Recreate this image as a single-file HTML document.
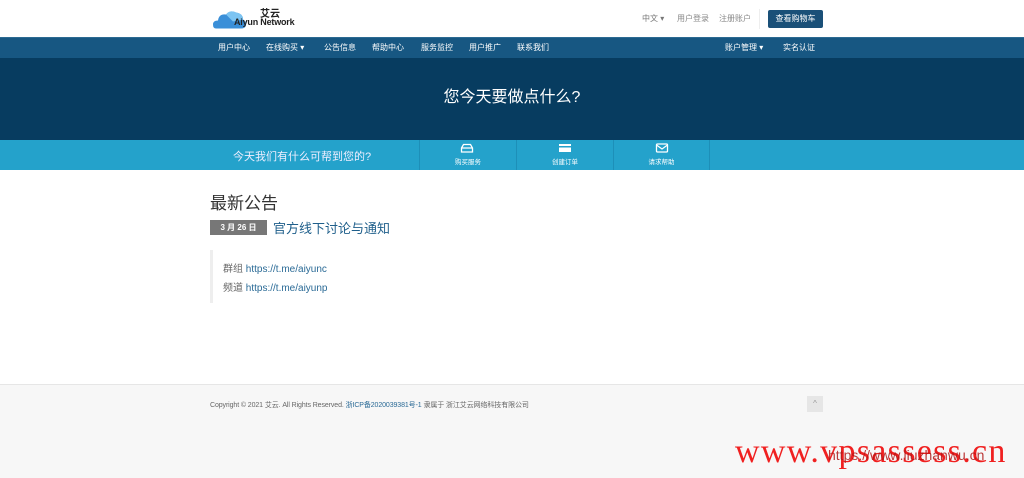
<!DOCTYPE html>
<html><head><meta charset="utf-8"><style>
*{margin:0;padding:0;box-sizing:border-box}
body{width:1024px;height:478px;overflow:hidden;background:#fff;font-family:"Liberation Sans","Noto Sans CJK SC",sans-serif;position:relative}
.a{position:absolute}
</style></head><body>
<div class="a" style="left:213px;top:9px;width:34px;height:21px">
<svg width="34" height="21" viewBox="0 0 34 20"><path d="M3 19 Q0 19 0 15 Q0 11 5 11 Q6 4 13 5 Q17 0 23 3 Q30 4 30 10 Q34 12 33 16 Q32 19 28 19Z" fill="#3a8fd8"/><path d="M13 5 Q17 0 23 3 Q30 4 30 10 L20 12Z" fill="#7cc4f2"/></svg></div>
<div class="a" style="left:260px;top:5px;font-size:10px;font-weight:bold;color:#222">艾云</div>
<div class="a" style="left:234px;top:17px;font-size:9px;font-weight:bold;color:#222;letter-spacing:-0.2px">Aiyun Network</div>
<div class="a" style="left:642px;top:13px;font-size:8px;color:#777">中文 ▾</div>
<div class="a" style="left:677px;top:13px;font-size:8px;color:#888">用户登录</div>
<div class="a" style="left:719px;top:13px;font-size:8px;color:#888">注册账户</div>
<div class="a" style="left:759px;top:9px;width:1px;height:20px;background:#eee"></div>
<div class="a" style="left:768px;top:10px;width:55px;height:18px;background:#1a5078;border-radius:2px;color:#fff;font-size:8px;text-align:center;line-height:18px">查看购物车</div>
<div class="a" style="left:0;top:37px;width:1024px;height:21px;background:#175782;border-top:1px solid #2c6a92"></div>
<div class="a" style="left:0;top:37px;width:1024px;height:21px;color:#fff;font-size:8px;line-height:21px">
<span class="a" style="left:218px">用户中心</span><span class="a" style="left:266px">在线购买 ▾</span><span class="a" style="left:324px">公告信息</span><span class="a" style="left:372px">帮助中心</span><span class="a" style="left:421px">服务监控</span><span class="a" style="left:469px">用户推广</span><span class="a" style="left:517px">联系我们</span><span class="a" style="left:725px">账户管理 ▾</span><span class="a" style="left:783px">实名认证</span></div>
<div class="a" style="left:0;top:58px;width:1024px;height:82px;background:#073c60"></div>
<div class="a" style="left:0;top:83px;width:1024px;text-align:center;color:#fff;font-size:16px">您今天要做点什么?</div>
<div class="a" style="left:0;top:140px;width:1024px;height:30px;background:#24a2cb"></div>
<div class="a" style="left:233px;top:148px;color:#eef;font-size:11px">今天我们有什么可帮到您的?</div>
<div class="a" style="left:419px;top:140px;width:1px;height:30px;background:#1d8fb8"></div>
<div class="a" style="left:516px;top:140px;width:1px;height:30px;background:#1d8fb8"></div>
<div class="a" style="left:613px;top:140px;width:1px;height:30px;background:#1d8fb8"></div>
<div class="a" style="left:709px;top:140px;width:1px;height:30px;background:#1d8fb8"></div>
<svg class="a" style="left:460px;top:143px" width="14" height="10"><path d="M1.5 5 L3.5 1.5 H10.5 L12.5 5 V9 H1.5Z M1.5 5 H12.5" fill="none" stroke="#fff" stroke-width="1.3"/></svg>
<svg class="a" style="left:558px;top:143px" width="14" height="10"><rect x="1" y="1" width="12" height="8" fill="#fff"/><rect x="1" y="3" width="12" height="1.5" fill="#24a2cb"/></svg>
<svg class="a" style="left:655px;top:143px" width="14" height="10"><rect x="1.5" y="1" width="11" height="8" rx="1" fill="none" stroke="#fff" stroke-width="1.3"/><path d="M1.5 2 L7 6 L12.5 2" fill="none" stroke="#fff" stroke-width="1.2"/></svg>
<div class="a" style="left:420px;top:156px;width:96px;text-align:center;color:#fff;font-size:6.5px">购买服务</div>
<div class="a" style="left:517px;top:156px;width:96px;text-align:center;color:#fff;font-size:6.5px">创建订单</div>
<div class="a" style="left:614px;top:156px;width:95px;text-align:center;color:#fff;font-size:6.5px">请求帮助</div>
<div class="a" style="left:210px;top:189px;font-size:17px;color:#333">最新公告</div>
<div class="a" style="left:210px;top:220px;width:57px;height:15px;background:#777;color:#fff;font-size:8px;font-weight:bold;text-align:center;line-height:15px">3 月 26 日</div>
<div class="a" style="left:273px;top:218px;font-size:13px;color:#1f5f8b">官方线下讨论与通知</div>
<div class="a" style="left:210px;top:250px;width:3px;height:53px;background:#eee"></div>
<div class="a" style="left:223px;top:260px;font-size:10px;color:#666">群组 <span style="color:#2a6a96">https://t.me/aiyunc</span></div>
<div class="a" style="left:223px;top:279px;font-size:10px;color:#666">频道 <span style="color:#2a6a96">https://t.me/aiyunp</span></div>
<div class="a" style="left:0;top:384px;width:1024px;height:94px;background:#f7f7f7;border-top:1px solid #e6e6e6"></div>
<div class="a" style="left:210px;top:400px;font-size:7px;color:#666;letter-spacing:-0.1px">Copyright © 2021 艾云. All Rights Reserved. <span style="color:#2a6a96">浙ICP备2020039381号-1</span> 隶属于 浙江艾云网络科技有限公司</div>
<div class="a" style="left:807px;top:396px;width:16px;height:16px;background:#e6e6e6;color:#999;font-size:8px;text-align:center;line-height:16px">^</div>
<div class="a" style="left:735px;top:433px;font-family:'Liberation Serif',serif;font-size:34px;color:#f02020;letter-spacing:1.3px">www.vpsassess.cn</div>
<div class="a" style="left:828px;top:447px;font-size:14px;color:#b01818;opacity:.85">https://www.liuzhanwu.cn</div>
</body></html>
